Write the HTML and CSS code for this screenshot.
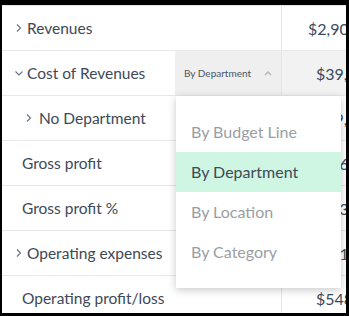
FILE: index.html
```html
<!DOCTYPE html>
<html lang="en">
<head>
  <meta charset="UTF-8">
  <meta name="viewport" content="width=device-width, initial-scale=1">
  <title>Profit and Loss</title>
  <link rel="stylesheet" href="styles.css">
</head>
<body>

  <div class="frame">
    <div class="report">
      <div class="row">
        <div class="label">
          <svg class="chev" viewBox="0 0 10 10"><path d="M3 1.5 L6.5 5 L3 8.5"/></svg>
          Revenues
        </div>
        <div class="amt">$2,902,118</div>
      </div>
      <div class="row active">
        <div class="label">
          <svg class="chev" viewBox="0 0 10 10"><path d="M1.5 3.5 L5 7 L8.5 3.5"/></svg>
          Cost of Revenues
          <div class="trigger">
            <span>By Department</span>
            <svg class="caret" viewBox="0 0 8 6"><path d="M1 5 L4 2 L7 5"/></svg>
          </div>
        </div>
        <div class="amt short">$39,615,20</div>
      </div>
      <div class="row">
        <div class="label sub">
          <svg class="chev" viewBox="0 0 10 10"><path d="M3 1.5 L6.5 5 L3 8.5"/></svg>
          No Department
        </div>
        <div class="amt short">$39,615,20</div>
      </div>
      <div class="row">
        <div class="label plain">Gross profit</div>
        <div class="amt">$2,862,503</div>
      </div>
      <div class="row">
        <div class="label plain">Gross profit %</div>
        <div class="amt">98.63%</div>
      </div>
      <div class="row">
        <div class="label">
          <svg class="chev" viewBox="0 0 10 10"><path d="M3 1.5 L6.5 5 L3 8.5"/></svg>
          Operating expenses
        </div>
        <div class="amt">$2,314,004</div>
      </div>
      <div class="row">
        <div class="label plain">Operating profit/loss</div>
        <div class="amt short">$548,499</div>
      </div>
    </div>

    <ul class="menu">
      <li>By Budget Line</li>
      <li class="selected">By Department</li>
      <li>By Location</li>
      <li>By Category</li>
    </ul>
  </div>

</body>
</html>
```

FILE: styles.css
```css
html, body {
  margin: 0;
  background: #000;
}
body {
  font-family: Lato, "Liberation Sans", sans-serif;
  width: 349px;
  height: 316px;
  overflow: hidden;
}
.frame {
  position: relative;
  height: 308px;
  border-style: solid;
  border-color: #000;
  border-width: 5px 3px 3px 2px;
  background: #fff;
  overflow: hidden;
}
.report {
  border-top: 1px solid #e3e5e8;
}
.row {
  display: grid;
  grid-template-columns: 279px 1fr;
  height: 44px;
  border-bottom: 1px solid #e6e8eb;
}
.label {
  display: flex;
  align-items: center;
  padding-left: 12px;
  font-size: 15.5px;
  color: #3d4958;
  white-space: nowrap;
}
.label.sub {
  padding-left: 22px;
}
.label.sub .chev {
  margin-right: 5px;
}
.label.plain {
  padding-left: 20px;
}
.chev {
  width: 10px;
  height: 10px;
  margin-right: 3px;
  fill: none;
  stroke: #6b7684;
  stroke-width: 1.2;
}
.trigger {
  margin-left: auto;
  width: 106px;
  height: 100%;
  box-sizing: border-box;
  display: flex;
  align-items: center;
  justify-content: space-between;
  padding: 0 9px;
  background: #efefef;
  font-size: 10px;
  color: #4a5562;
}
.caret {
  width: 8px;
  height: 6px;
  fill: none;
  stroke: #b4b8bd;
  stroke-width: 1.5;
}
.amt {
  border-left: 1px solid #e4e6e9;
  display: flex;
  align-items: center;
  padding-left: 26px;
  font-size: 16px;
  color: #3a4a5d;
  white-space: nowrap;
  overflow: hidden;
}
.amt.short {
  padding-left: 34px;
}
.active .amt {
  background: #f2f2f2;
}
.menu {
  position: absolute;
  left: 174px;
  top: 91px;
  width: 165px;
  margin: 0;
  padding: 16px 0;
  list-style: none;
  background: #fff;
  box-shadow: 0 2px 8px rgba(0, 0, 0, 0.22);
}
.menu li {
  height: 40px;
  line-height: 40px;
  padding-left: 15px;
  font-size: 16px;
  color: #9a9ea4;
}
.menu li.selected {
  background: #cff5e3;
  color: #3e4955;
}
```
